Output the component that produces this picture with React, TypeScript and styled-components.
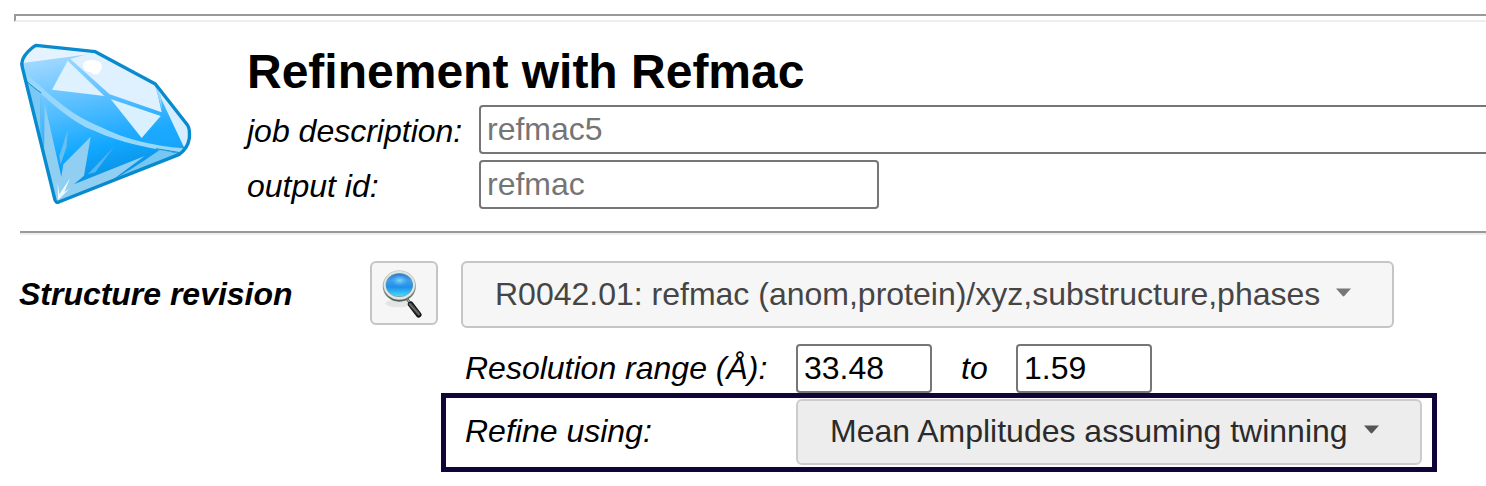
import React from "react";
import styled, { createGlobalStyle } from "styled-components";

const GlobalStyle = createGlobalStyle`
  *, *::before, *::after { box-sizing: border-box; }
  html, body { margin: 0; padding: 0; background: #fff; overflow: hidden; }
  body { font-family: "Liberation Sans", Arial, Helvetica, sans-serif; font-size: 32px; color: #000; }
`;

const Page = styled.main`
  width: 100%;
  height: 486px;
  padding-top: 14px;
  overflow: hidden;
  background: #fff;
`;

const FrameEdge = styled.div`
  height: 8px;
  margin-left: 14px;
  border: 2px solid;
  border-color: #999 transparent #eee #999;
  border-right: 0;
`;

const Header = styled.header`
  display: flex;
  height: 209px;
  padding: 16px 0 0 15px;
`;

const HeaderFields = styled.div`
  flex: 1;
  min-width: 0;
  margin-left: 47px;
`;

const Title = styled.h1`
  margin: 6px 0 0;
  height: 61px;
  font-size: 48px;
  line-height: 56px;
  font-weight: 700;
  white-space: nowrap;
`;

const Label = styled.span<{ $bold?: boolean }>`
  font-style: italic;
  font-weight: ${(p) => (p.$bold ? 700 : 400)};
  line-height: 37px;
  white-space: nowrap;
`;

const FieldRow = styled.div`
  display: grid;
  grid-template-columns: 232px 1fr;
  align-items: center;
  height: 49px;
  margin-bottom: 6px;
  ${Label} { padding-top: 4px; }
`;

const TextInput = styled.input<{ $width: string }>`
  width: ${(p) => p.$width};
  height: 49px;
  margin: 0;
  padding: 0 6px;
  border: 2px solid #767676;
  border-radius: 4px;
  background: #fff;
  color: #000;
  font: inherit;
  outline: none;
  &::placeholder { color: #757575; opacity: 1; }
`;

const Divider = styled.hr`
  height: 4px;
  margin: 0 0 0 20px;
  border: 0;
  border-top: 2px solid #999;
  border-bottom: 2px solid #eee;
`;

const RevisionRow = styled.section`
  display: grid;
  grid-template-columns: 351px 91px auto;
  justify-content: start;
  align-items: start;
  height: 109px;
  padding: 26px 0 0 19px;
  ${Label} { margin-top: 15px; letter-spacing: -0.02px; }
`;

const InspectButton = styled.button`
  width: 68px;
  height: 64px;
  padding: 0;
  border: 2px solid #c5c5c5;
  border-radius: 6px;
  background: #f6f6f6;
  svg { display: block; margin: 5px 0 0 10px; }
`;

const Dropdown = styled.button<{ $width: number; $height: number; $active?: boolean }>`
  display: flex;
  align-items: center;
  width: ${(p) => p.$width}px;
  height: ${(p) => p.$height}px;
  padding: 0 0 1px 32px;
  border: 2px solid ${(p) => (p.$active ? "#ccc" : "#c5c5c5")};
  border-radius: 6px;
  background: ${(p) => (p.$active ? "#ededed" : "#f6f6f6")};
  color: ${(p) => (p.$active ? "#2b2b2b" : "#454545")};
  font: inherit;
  white-space: nowrap;
`;

const Caret = styled.svg`
  display: block;
  margin: 0 41px 4px auto;
`;

const RangeRow = styled.section`
  display: grid;
  grid-template-columns: 331px 136px 84px 136px;
  align-items: center;
  height: 49px;
  margin-left: 465px;
`;

const Joiner = styled(Label)`
  padding-left: 29px;
`;

const Highlight = styled.section`
  display: grid;
  grid-template-columns: 350px auto;
  justify-content: start;
  align-items: start;
  width: 996px;
  height: 79px;
  margin-left: 441px;
  padding: 1px 0 0 0;
  border: 5px solid #110438;
  ${Label} { margin: 14px 0 0 19px; }
`;

function Diamond() {
  return (
    <svg width="185" height="172" viewBox="45 24 555 516" aria-hidden="true">
      <defs>
        <linearGradient id="gemBody" x1="230" y1="60" x2="330" y2="460" gradientUnits="userSpaceOnUse">
          <stop offset="0" stopColor="#a2d9ff" />
          <stop offset="0.35" stopColor="#60c2ff" />
          <stop offset="0.72" stopColor="#12a8ff" />
          <stop offset="1" stopColor="#078ee0" />
        </linearGradient>
        <linearGradient id="gemUpper" x1="220" y1="60" x2="270" y2="330" gradientUnits="userSpaceOnUse">
          <stop offset="0" stopColor="#a4daff" />
          <stop offset="0.5" stopColor="#62c2ff" />
          <stop offset="1" stopColor="#20aaff" />
        </linearGradient>
        <clipPath id="gemClip">
          <path d="M108 46 L286 65 L466 162 L563 286 Q570 296 568 325 Q563 356 538 373 L176 516 Q169 520 165 510 L67 112 Q60 90 84 65 Q96 52 108 46Z" />
        </clipPath>
      </defs>
      <g clipPath="url(#gemClip)">
        <rect x="45" y="24" width="555" height="516" fill="url(#gemBody)" />
        <path d="M60 98 L275 72 L466 162 L570 300 L545 356 C350 350 230 270 72 130Z" fill="url(#gemUpper)" opacity="0.6" />
        <path d="M108 44 L286 65 L276 71 L68 99 L62 70Z" fill="#e4f3ff" />
        <path d="M211 87 L286 65 L466 162 L485 247 L329 193Z" fill="#dff1ff" />
        <path d="M203 92 L313 198 L156 179Z" fill="#ddf1ff" />
        <path d="M332 207 L482 258 L425 324Z" fill="#d9f0ff" />
        <path d="M464 165 L570 290 L568 335 L552 352Z" fill="#d4edff" />
        <path d="M464 165 L482 196 L487 239 Z" fill="#98d8ff" />
        <path d="M69 123 C154 196 200 249 302 291 C380 330 460 347 550 355 L541 369 C454 358 358 337 286 304 C207 273 151 215 73 146Z" fill="#97d7fa" />
        <path d="M77 154 L121 187 L122 322 L120 330Z" fill="#79c8f5" />
        <path d="M77 151 C94 167 110 180 124 189" fill="none" stroke="#168bc8" strokeWidth="3" />
        <path d="M121 190 L128 330 L136 375 L121 335Z" fill="#5cb9ef" />
        <path d="M134 221 L184 440 L190 403 L272 320 L252 437 L222 463 L434 378 L330 455 L170 518 L132 380Z" fill="#90cff2" />
        <path d="M203 300 L200 350 L182 403 L178 377Z" fill="#65bff0" />
        <path d="M342 350 L286 427 L263 433Z" fill="#51b5f1" />
        <path d="M480 359 L536 371 L324 457 Q390 422 480 359Z" fill="#77c7f5" />
        <path d="M468 356 L541 368" stroke="#178fcc" strokeWidth="3" />
        <path d="M173 456 L178 493 L210 445 L193 486 L208 476 L174 511Z" fill="#eef9ff" />
      </g>
      <path d="M249 103 C252 87 290 86 301 98 Q310 108 302 121 C298 136 280 137 273 127 Q247 124 249 103Z" fill="#fff" />
      <path d="M108 46 L286 65 L466 162 L563 286 Q570 296 568 325 Q563 356 538 373 L176 516 Q169 520 165 510 L67 112 Q60 90 84 65 Q96 52 108 46Z" fill="none" stroke="#078ace" strokeWidth="10" strokeLinejoin="round" />
    </svg>
  );
}

function Magnifier() {
  return (
    <svg width="44" height="52" viewBox="0 0 132 156" aria-hidden="true">
      <defs>
        <linearGradient id="lens" x1="0" y1="0" x2="0" y2="1">
          <stop offset="0" stopColor="#2a7cc8" />
          <stop offset="0.3" stopColor="#3b9fec" />
          <stop offset="0.6" stopColor="#2090e8" />
          <stop offset="1" stopColor="#45dcff" />
        </linearGradient>
        <radialGradient id="lensShine">
          <stop offset="0" stopColor="#8edcff" stopOpacity="0.9" />
          <stop offset="1" stopColor="#55baff" stopOpacity="0" />
        </radialGradient>
        <linearGradient id="rim" x1="0" y1="0" x2="0" y2="1">
          <stop offset="0" stopColor="#c6ccc9" />
          <stop offset="0.5" stopColor="#a0aaa5" />
          <stop offset="1" stopColor="#4c5853" />
        </linearGradient>
        <linearGradient id="grip" x1="105" y1="114" x2="92" y2="126" gradientUnits="userSpaceOnUse">
          <stop offset="0" stopColor="#111" />
          <stop offset="0.5" stopColor="#747877" />
          <stop offset="0.75" stopColor="#222" />
          <stop offset="1" stopColor="#111" />
        </linearGradient>
      </defs>
      <ellipse cx="49" cy="100" rx="38" ry="12" fill="#000" opacity="0.07" />
      <path d="M76 88 L88 104" stroke="#59605d" strokeWidth="8" />
      <path d="M75 87 L87 101" stroke="#d9dddb" strokeWidth="3" />
      <path d="M86 103 L110 134" stroke="#111" strokeWidth="17" strokeLinecap="round" />
      <path d="M86 103 L108 132" stroke="url(#grip)" strokeWidth="12" strokeLinecap="round" />
      <ellipse cx="52" cy="48" rx="50" ry="47" fill="url(#rim)" />
      <ellipse cx="52" cy="46" rx="47" ry="43" fill="#dfe5e1" />
      <ellipse cx="52" cy="45" rx="41" ry="36" fill="#7d9ba5" />
      <ellipse cx="52" cy="45" rx="40" ry="34" fill="url(#lens)" />
      <ellipse cx="53" cy="31" rx="26" ry="18" fill="url(#lensShine)" />
    </svg>
  );
}

function DropdownCaret({ color }: { color: string }) {
  return (
    <Caret width="15" height="9" viewBox="0 0 15 9" aria-hidden="true">
      <path d="M0 0.5 H15 L8.3 8 Q7.5 8.8 6.7 8Z" fill={color} />
    </Caret>
  );
}

export default function App() {
  return (
    <>
      <GlobalStyle />
      <Page>
        <FrameEdge />
        <Header>
          <Diamond />
          <HeaderFields>
            <Title>Refinement with Refmac</Title>
            <FieldRow>
              <Label>job description:</Label>
              <TextInput $width="1020px" placeholder="refmac5" aria-label="job description" />
            </FieldRow>
            <FieldRow>
              <Label>output id:</Label>
              <TextInput $width="400px" placeholder="refmac" aria-label="output id" />
            </FieldRow>
          </HeaderFields>
        </Header>
        <Divider />
        <RevisionRow>
          <Label $bold>Structure revision</Label>
          <InspectButton aria-label="Inspect revision">
            <Magnifier />
          </InspectButton>
          <Dropdown $width={933} $height={67}>
            R0042.01: refmac (anom,protein)/xyz,substructure,phases
            <DropdownCaret color="#777" />
          </Dropdown>
        </RevisionRow>
        <RangeRow>
          <Label>Resolution range (Å):</Label>
          <TextInput $width="136px" defaultValue="33.48" aria-label="Lowest resolution" />
          <Joiner>to</Joiner>
          <TextInput $width="136px" defaultValue="1.59" aria-label="Highest resolution" />
        </RangeRow>
        <Highlight>
          <Label>Refine using:</Label>
          <Dropdown $width={626} $height={66} $active>
            Mean Amplitudes assuming twinning
            <DropdownCaret color="#555" />
          </Dropdown>
        </Highlight>
      </Page>
    </>
  );
}
